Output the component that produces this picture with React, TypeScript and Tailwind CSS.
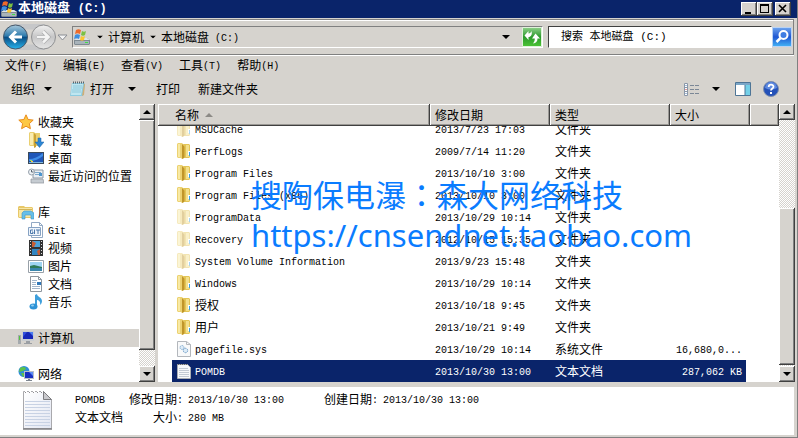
import { ReactNode, useState } from "react";

type IconProps = { className?: string };

const raised =
  "bg-[#d6d3ce] shadow-[inset_-1px_-1px_#404040,inset_1px_1px_#fff,inset_-2px_-2px_#808080]";

// Latin runs are set smaller so that one CJK glyph is as wide as two of them
function Txt({ children }: { children: string }) {
  return (
    <>
      {children.split(/([\x20-\x7e]+)/).map((part, i) =>
        i % 2 ? (
          <span
            key={i}
            className="align-middle font-['Liberation_Mono',monospace] text-[10px] leading-none whitespace-pre"
          >
            {part}
          </span>
        ) : (
          part
        )
      )}
    </>
  );
}

function Caret({ className = "" }: IconProps) {
  return (
    <svg width="8" height="4" viewBox="0 0 8 4" className={`shrink-0 ${className}`}>
      <path d="M0 0h8L4 4z" fill="currentColor" />
    </svg>
  );
}

function DriveIcon({ className = "" }: IconProps) {
  return (
    <svg width="17" height="17" viewBox="0 0 17 17" className={`shrink-0 ${className}`}>
      <path d="M1 11l3-2h10l3 2v4l-1 1H2l-1-1z" fill="#7f8a92" />
      <path d="M1 11l3-2h10l3 2z" fill="#dfe4e8" />
      <path d="M2 12h14v3H2z" fill="#a9b3ba" />
      <path d="M12 13h3v1h-3z" fill="#3fe04a" />
      <path d="M3 1c2-1 3-1 5 0L7 5C5 4 4 4 2 5z" fill="#ee6a2a" />
      <path d="M9 2c1 1 3 1 4 0l-1 4c-1 1-3 1-4 0z" fill="#7bc142" />
      <path d="M2 6c1-1 3-1 5 0l-1 4c-2-1-3-1-5 0z" fill="#3d8ee0" />
      <path d="M8 7c1 1 3 1 4 0l-1 4c-1 1-3 1-4 0z" fill="#fbc62f" />
    </svg>
  );
}

function FolderIcon({ faded = false }: { faded?: boolean }) {
  return (
    <svg
      width="14"
      height="16"
      viewBox="0 0 14 16"
      className={faded ? "shrink-0 opacity-45" : "shrink-0"}
    >
      <path d="M6 1h6l1 1v12l-1 1H5z" fill="#e3c556" />
      <path d="M9 2h3v12H9z" fill="#f3e08c" />
      <path d="M0 1l1-1h4l2 2v13l-2 1-1-1H1l-1-1z" fill="#ecd272" />
      <path d="M1 1h2v13H1z" fill="#f8e9a4" />
      <path d="M5 1l2 2v12l-2 1z" fill="#c0962a" />
      <path d="M7 4l1-1v11l-1 1z" fill="#d6b040" />
      <path d="M11 8h2v4h-2z" fill="#fff" />
      <path d="M12 9h1v4h-1z" fill="#3ba2e8" />
    </svg>
  );
}

function SysFileIcon() {
  return (
    <svg width="14" height="16" viewBox="0 0 14 16" className="shrink-0">
      <path d="M.5 .5h9l4 3v12H.5z" fill="#f8f9fa" stroke="#b3b7bc" />
      <path d="M9.500 .5v3h4" fill="none" stroke="#b3b7bc" />
      <circle cx="5" cy="6.500" r="2" fill="#dcebf7" stroke="#86aed2" strokeDasharray="1.500 .6" />
      <circle cx="8.500" cy="9.500" r="2.200" fill="#dcebf7" stroke="#6f9dc7" strokeDasharray="1.500 .6" />
    </svg>
  );
}

function TextFileIcon() {
  return (
    <svg width="14" height="16" viewBox="0 0 14 16" className="shrink-0">
      <path d="M.5 1.500h10l3 3v11H.5z" fill="#f7f8fa" stroke="#a8acb2" />
      <path d="M2 5.500h9M2 7.500h10M2 9.500h10M2 11.500h10M2 13.500h10" stroke="#c3cad4" />
      <path d="M1 1.500h10" stroke="#666" strokeDasharray="1 1" />
    </svg>
  );
}

function NotepadLarge() {
  return (
    <svg width="32" height="42" viewBox="0 0 32 42" className="shrink-0">
      <defs>
        <linearGradient id="paper" x1="0" y1="0" x2="1" y2="1">
          <stop offset="0" stopColor="#fff" />
          <stop offset="1" stopColor="#e2e6f2" />
        </linearGradient>
      </defs>
      <path d="M1.500 2.500h20l8 8v29h-28z" fill="url(#paper)" stroke="#a9a9ad" />
      <path d="M1 40h29" stroke="#7e7e82" strokeWidth="1.500" />
      <path
        d="M3 12.500h25M3 15.500h25M3 18.500h25M3 21.500h25M3 24.500h25M3 27.500h25M3 30.500h25M3 33.500h25M3 36.500h25"
        stroke="#c8d2e4"
      />
      <path d="M21.500 2.500v8h8z" fill="#c9c9cd" stroke="#7c7c80" />
      <path d="M3 2.500h18" stroke="#fff" strokeWidth="3" strokeDasharray="2 2" />
      <path d="M3 3.500h18" stroke="#8f8f93" strokeDasharray="1 3" />
    </svg>
  );
}

const treeIcons: Record<string, ReactNode> = {
  star: (
    <path
      d="M8 .8l2.100 4.700 5.100.6-3.800 3.500 1 5.100L8 12.200l-4.400 2.500 1-5.100L.8 6.100l5.100-.6z"
      fill="#fdc844"
      stroke="#e98b1c"
    />
  ),
  download: (
    <>
      <path d="M1 1l1-1h4l1 1h5v13H2l-1-1z" fill="#ead071" />
      <path d="M2 1h3v12H2z" fill="#faecb0" />
      <path d="M6 1l2 2v12l-2 1z" fill="#cba233" />
      <path d="M10 6h3v4h3l-4.500 5.500L7 10h3z" fill="#2d87d4" stroke="#1b62a8" strokeWidth=".5" />
    </>
  ),
  desktop: (
    <>
      <path d="M0 2h16v12H0z" fill="#3a4a5c" />
      <path d="M1 3h14v9H1z" fill="#1f56b8" />
      <path d="M1 9c5 0 9-2 14-6v3c-4 3-8 5-14 5z" fill="#3f8ce6" />
      <path d="M1 12h14v1H1z" fill="#7fb7dd" />
      <path d="M2 10h2v1H2z" fill="#9fe05a" />
      <path d="M3 11h2v1H3z" fill="#ffc83a" />
    </>
  ),
  recent: (
    <>
      <path d="M5 2h10v8H5z" fill="#e9eef3" stroke="#8c98a4" />
      <path d="M7 4h6v1H7zM7 6h4v1H7z" fill="#7ea9cb" />
      <path d="M11 5h3v3h-3z" fill="#4b95cf" />
      <path d="M3 11h12l1 4H3z" fill="#c6ccd2" stroke="#8c949c" strokeWidth=".7" />
      <circle cx="3.500" cy="4" r="3" fill="#eef2f6" stroke="#96a0aa" />
      <path d="M3.500 2v2h2" stroke="#5b6772" fill="none" />
    </>
  ),
  library: (
    <>
      <path d="M0 3l1-1h5l1 1h7l1 1v9l-1 1H1l-1-1z" fill="#e8c868" />
      <path d="M1 4h13v9H1z" fill="#f8e7a6" />
      <path d="M1 5h13v1H1z" fill="#d3b457" />
      <path d="M4 15V9l2-2h7l3 2v6h-3v-4H7v4z" fill="#67bfe8" stroke="#3c95c8" strokeWidth=".6" />
    </>
  ),
  git: (
    <>
      <path d="M3.500 .5h8l3 3v12h-11z" fill="#fff" stroke="#92a9c4" />
      <path d="M11.500 .5v3h3" fill="none" stroke="#92a9c4" />
      <path d="M.5 5.500h12v8H.5z" fill="#eef4fb" stroke="#86a2c3" />
      <path
        d="M5 8H2.500v3.500H5V10H4M6.500 7.500V12M8 8h4M10 8v4"
        fill="none"
        stroke="#4c78ab"
      />
    </>
  ),
  video: (
    <>
      <path d="M1 0h14v16H1z" fill="#333" />
      <path d="M4 1h8v6H4z" fill="#4ba3da" />
      <path d="M4 9h8v6H4z" fill="#3286c2" />
      <path d="M4 1l4 2-2 4H4zM12 9l-3 2 1 4h2z" fill="#c85e35" />
      <path d="M2.500 1v15M13.500 1v15" stroke="#ddd" strokeDasharray="1 2" />
    </>
  ),
  picture: (
    <>
      <path d="M.5 2.500h15v12H.5z" fill="#fff" stroke="#98a0a8" />
      <path d="M2 4h12v9H2z" fill="#9fd4f2" />
      <path d="M2 8l4-1 8 2v1H2z" fill="#2e7a58" />
      <path d="M2 10h12v3H2z" fill="#3a86ac" />
    </>
  ),
  document: (
    <>
      <path d="M2.500 .5h8l3 3v12h-11z" fill="#fff" stroke="#8e969e" />
      <path d="M10.500 .5v3h3" fill="none" stroke="#8e969e" />
      <path d="M4 4.500h5M4 6.500h4M4 8.500h4M4 10.500h8M4 12.500h8" stroke="#a4b6ca" />
      <path d="M9 6h4v3H9z" fill="#3178b9" />
    </>
  ),
  music: (
    <>
      <path d="M7 1l2-1c0 3 5 3 5 7 0 2-1 3-2 4 1-4-2-5-3-5v6H7z" fill="#3d9fdc" />
      <ellipse cx="5.500" cy="12.500" rx="4" ry="3" fill="#2f93d6" />
      <ellipse cx="4.500" cy="11.500" rx="1.500" ry="1" fill="#8fd0f4" />
    </>
  ),
  computer: (
    <>
      <path d="M4 1h12v10H4z" fill="#c9cdd1" />
      <path d="M5 2h10v7H5z" fill="#1627b8" />
      <path d="M11 2h4v4z" fill="#4d7df0" />
      <path d="M5 2h4L5 7z" fill="#3350dc" />
      <path d="M8 11h4v2h2v1H6v-1h2z" fill="#9a9ea3" />
      <path d="M0 5h3v9H0z" fill="#a4a9ad" />
      <path d="M1 6h1v4H1z" fill="#52c43e" />
    </>
  ),
  network: (
    <>
      <circle cx="6" cy="5.500" r="5.500" fill="#2f8fd8" />
      <path d="M2 2c3-2 6-1 6 1L5 5 1 6zM3 7h4v3l-2 1z" fill="#5cc24a" />
      <path d="M6 5h10v8H6z" fill="#b8bfca" />
      <path d="M7 6h8v6H7z" fill="#1730c0" />
      <path d="M11 6h4v4z" fill="#5c8cf4" />
      <path d="M10 13h2v1h2v1H8v-1h2z" fill="#7f8791" />
    </>
  ),
};

const tree = [
  {
    label: "收藏夹",
    icon: "star",
    children: [
      { label: "下载", icon: "download" },
      { label: "桌面", icon: "desktop" },
      { label: "最近访问的位置", icon: "recent" },
    ],
  },
  {
    label: "库",
    icon: "library",
    children: [
      { label: "Git", icon: "git" },
      { label: "视频", icon: "video" },
      { label: "图片", icon: "picture" },
      { label: "文档", icon: "document" },
      { label: "音乐", icon: "music" },
    ],
  },
  { label: "计算机", icon: "computer", active: true, children: [] },
  { label: "网络", icon: "network", children: [] },
];

const files = [
  { name: "MSUCache", date: "2013/7/23 17:03", type: "文件夹", size: "", icon: "faded" },
  { name: "PerfLogs", date: "2009/7/14 11:20", type: "文件夹", size: "", icon: "folder" },
  { name: "Program Files", date: "2013/10/10 3:00", type: "文件夹", size: "", icon: "folder" },
  { name: "Program Files (x86)", date: "2013/10/10 3:00", type: "文件夹", size: "", icon: "folder" },
  { name: "ProgramData", date: "2013/10/29 10:14", type: "文件夹", size: "", icon: "faded" },
  { name: "Recovery", date: "2012/10/15 15:35", type: "文件夹", size: "", icon: "faded" },
  { name: "System Volume Information", date: "2013/9/23 15:48", type: "文件夹", size: "", icon: "faded" },
  { name: "Windows", date: "2013/10/29 10:14", type: "文件夹", size: "", icon: "folder" },
  { name: "授权", date: "2013/10/18 9:45", type: "文件夹", size: "", icon: "folder" },
  { name: "用户", date: "2013/10/21 9:49", type: "文件夹", size: "", icon: "folder" },
  { name: "pagefile.sys", date: "2013/10/29 10:14", type: "系统文件", size: "16,680,0...", icon: "sys" },
  { name: "POMDB", date: "2013/10/30 13:00", type: "文本文档", size: "287,062 KB", icon: "text" },
];

function FileIcon({ kind }: { kind: string }) {
  if (kind === "sys") return <SysFileIcon />;
  if (kind === "text") return <TextFileIcon />;
  return <FolderIcon faded={kind === "faded"} />;
}

function ScrollBar({ before, thumb, after }: { before: string; thumb: string; after: string }) {
  return (
    <div className="flex w-4 shrink-0 flex-col bg-[repeating-conic-gradient(#fff_0_25%,#d6d3ce_0_50%)] bg-[length:2px_2px]">
      <button aria-label="向上滚动" className={`flex h-4 items-center justify-center ${raised}`}>
        <Caret className="rotate-180" />
      </button>
      <div className={before} />
      <div className={`${thumb} ${raised}`} />
      <div className={after} />
      <button aria-label="向下滚动" className={`flex h-4 items-center justify-center ${raised}`}>
        <Caret />
      </button>
    </div>
  );
}

function TitleBar() {
  return (
    <header className="flex h-[18px] shrink-0 items-center bg-[#0a246a] pr-[6px] text-white">
      <DriveIcon />
      <h1 className="pl-px font-['Liberation_Mono','Noto_Sans_CJK_SC',monospace] text-[13px] leading-[18px] font-bold whitespace-pre">
        本地磁盘 <span className="text-xs">(C:)</span>
      </h1>
      <div className="ml-auto flex text-black">
        <button aria-label="最小化" className={`h-[14px] w-4 ${raised}`}>
          <svg width="16" height="14" viewBox="0 0 16 14">
            <path d="M4 10h6v2H4z" />
          </svg>
        </button>
        <button aria-label="最大化" className={`h-[14px] w-4 ${raised}`}>
          <svg width="16" height="14" viewBox="0 0 16 14">
            <path d="M3 2h9v9H3zM4 4v6h7V4z" fillRule="evenodd" />
          </svg>
        </button>
        <button aria-label="关闭" className={`ml-[2px] h-[14px] w-4 ${raised}`}>
          <svg width="16" height="14" viewBox="0 0 16 14">
            <path d="M4 3l7 7M11 3l-7 7" stroke="#000" strokeWidth="1.600" />
          </svg>
        </button>
      </div>
    </header>
  );
}

function NavBar() {
  return (
    <div className="mt-px mr-[3px] flex h-9 shrink-0 items-center border border-l-0 border-[#808080] pl-[3px] shadow-[inset_0_1px_#fff,0_1px_#fff]">
      <svg width="65" height="28" viewBox="0 0 65 28" className="shrink-0">
        <defs>
          <linearGradient id="back" x1="0" y1="0" x2="0" y2="1">
            <stop offset="0" stopColor="#a9c9dc" />
            <stop offset=".45" stopColor="#2f7cae" />
            <stop offset=".52" stopColor="#0a4f86" />
            <stop offset="1" stopColor="#27b4ee" />
          </linearGradient>
          <linearGradient id="fwd" x1="0" y1="0" x2="0" y2="1">
            <stop offset="0" stopColor="#f1f1f1" />
            <stop offset=".5" stopColor="#c6c6c7" />
            <stop offset="1" stopColor="#e6e6e6" />
          </linearGradient>
        </defs>
        <path d="M10 1h32v4c-6 2-22 2-28 0zM10 27h32v-4c-6-2-22-2-28 0z" fill="#c6c7c9" />
        <circle cx="12.500" cy="14" r="12" fill="url(#back)" stroke="#46586a" />
        <path d="M13 8.500L7.500 14l5.500 5.500M8 14h11" fill="none" stroke="#fff" strokeWidth="3" />
        <circle cx="40.500" cy="14" r="12" fill="url(#fwd)" stroke="#8f9092" />
        <path d="M40 8.500l5.500 5.500-5.500 5.500M45 14H34" fill="none" stroke="#aaabac" strokeWidth="4" />
        <path d="M40 8.500l5.500 5.500-5.500 5.500M45 14H34" fill="none" stroke="#f4f4f4" strokeWidth="2.600" />
        <path d="M55 12h9l-4.500 5z" fill="#f4f4f4" stroke="#8a8d94" />
      </svg>
      <nav
        aria-label="地址"
        className="ml-1 flex h-[22px] min-w-0 flex-1 items-center border border-t-[#808080] border-r-white border-b-white border-l-[#808080]"
      >
        <DriveIcon />
        <Caret className="ml-[6px] scale-75" />
        <a href="#computer" className="ml-1 whitespace-nowrap">
          计算机
        </a>
        <Caret className="ml-[5px] scale-75" />
        <a href="#c" className="ml-1 whitespace-nowrap">
          <Txt>本地磁盘 (C:)</Txt>
        </a>
        <button aria-label="历史地址" className="mr-3 ml-auto">
          <Caret />
        </button>
        <button aria-label="刷新">
          <svg width="20" height="20" viewBox="0 0 20 20">
            <defs>
              <linearGradient id="reload" x1="0" y1="0" x2="0" y2="1">
                <stop offset="0" stopColor="#8fd08a" />
                <stop offset=".5" stopColor="#2c9a2c" />
                <stop offset="1" stopColor="#4cc435" />
              </linearGradient>
            </defs>
            <path d="M.5 .5h19v19H.5z" fill="url(#reload)" stroke="#dff2da" />
            <path d="M2.500 8.500L6.500 4v2.500c1.500 0 2.500-1 3-2.500 1 3.500-.5 6-3 6V13z" fill="#fff" />
            <path d="M10 11.500l3.500-5 4.500 5h-2.500c0 3-1.500 4.500-4.500 5 1.300-1.500 1.800-3 1.800-5z" fill="#fff" />
          </svg>
        </button>
      </nav>
      <div className="ml-[5px] flex w-[224px] items-center">
        <input
          aria-label="搜索"
          placeholder="搜索 本地磁盘 (C:)"
          className="h-[22px] min-w-0 flex-1 border border-t-[#404040] border-r-white border-b-white border-l-[#404040] bg-white pl-3 font-['Liberation_Mono','Noto_Sans_CJK_SC',monospace] text-[11px] outline-none placeholder:text-black"
        />
      </div>
      <button aria-label="开始搜索" className="mr-px">
        <svg width="20" height="20" viewBox="0 0 20 20">
          <defs>
            <linearGradient id="find" x1="0" y1="0" x2="0" y2="1">
              <stop offset="0" stopColor="#6fa5ee" />
              <stop offset=".5" stopColor="#1f57d2" />
              <stop offset="1" stopColor="#44b4f6" />
            </linearGradient>
          </defs>
          <path d="M.5 .5h19v19H.5z" fill="url(#find)" stroke="#b9d2f3" />
          <circle cx="11.500" cy="8" r="4" fill="#3f7de2" stroke="#fff" strokeWidth="2" />
          <path d="M8.500 11l-4 4" stroke="#fff" strokeWidth="2.500" />
        </svg>
      </button>
    </div>
  );
}

function MenuBar() {
  const items = ["文件(F)", "编辑(E)", "查看(V)", "工具(T)", "帮助(H)"];
  return (
    <nav className="mt-px flex h-[18px] shrink-0 items-center gap-4 pl-[5px]">
      {items.map((item) => (
        <button key={item} className="whitespace-nowrap">
          <Txt>{item}</Txt>
        </button>
      ))}
    </nav>
  );
}

function ToolBar() {
  return (
    <div className="flex h-[30px] shrink-0 items-center pr-[18px] pl-[11px] whitespace-nowrap">
      <button className="flex items-center gap-[9px]">
        组织
        <Caret />
      </button>
      <button className="ml-[18px] flex items-center gap-1">
        <svg width="16" height="16" viewBox="0 0 16 16">
          <path d="M2 2h12l1 1-2 12H0z" fill="#8ccbe0" />
          <path d="M2 3h11l-2 11H1z" fill="#bfe6f0" />
          <path d="M3 5h9M3 7h9M2 9h9M2 11h9" stroke="#7dbbd2" strokeWidth=".7" />
          <path d="M14 3h1l-1 11-2 1z" fill="#cfae77" />
          <path d="M3 1.500h11" stroke="#56646c" strokeWidth="2" strokeDasharray="1 1" />
        </svg>
        打开
      </button>
      <button aria-label="打开方式" className="ml-[14px]">
        <Caret />
      </button>
      <button className="ml-5">打印</button>
      <button className="ml-[18px]">新建文件夹</button>
      <div className="ml-auto flex items-center">
        <button aria-label="更改视图">
          <svg width="16" height="13" viewBox="0 0 16 13">
            <path d="M.5 .5h3v12h-3zM.5 4.500h3M.5 8.500h3" fill="#fff" stroke="#8a97a8" />
            <path d="M1.500 2.500h1M1.500 10.500h1" stroke="#4778b4" />
            <path d="M1.500 6.500h1" stroke="#c33" />
            <path d="M6 2.500h10M6 6.500h10M6 10.500h10" stroke="#7b8796" strokeDasharray="4 1" />
          </svg>
        </button>
        <button aria-label="更多视图" className="ml-3">
          <Caret />
        </button>
        <button aria-label="预览窗格" className="ml-[15px]">
          <svg width="16" height="14" viewBox="0 0 16 14">
            <path d="M.5 .5h15v13H.5z" fill="#fff" stroke="#4e7596" />
            <path d="M1 1h14v2H1z" fill="#7ba6c7" />
            <path d="M10 3h5v10h-5z" fill="#73d0e8" />
            <path d="M10 3v10" stroke="#4e7596" />
          </svg>
        </button>
        <button aria-label="帮助" className="ml-3">
          <svg width="16" height="16" viewBox="0 0 16 16">
            <circle cx="8" cy="8" r="7.500" fill="#2451b8" stroke="#7f8fae" />
            <path d="M2 7a6 6 0 0112 0c-4 2-8 2-12 0z" fill="#5f8ae0" />
            <path d="M5.700 6c0-3 4.800-3 4.800-.3C10.500 7.500 8 7.500 8 9.500" fill="none" stroke="#fff" strokeWidth="1.800" />
            <path d="M7 11h2v2H7z" fill="#fff" />
          </svg>
        </button>
      </div>
    </div>
  );
}

function TreeItem({ label, icon, child, active }: { label: string; icon: string; child?: boolean; active?: boolean }) {
  return (
    <a
      href={`#${icon}`}
      className={`flex h-[18px] items-center gap-1 whitespace-nowrap ${child ? "pl-7" : "pl-[18px]"} ${active ? "bg-[#d6d3ce]" : ""}`}
    >
      <svg width="16" height="16" viewBox="0 0 16 16" className="shrink-0">
        {treeIcons[icon]}
      </svg>
      <span>
        <Txt>{label}</Txt>
      </span>
    </a>
  );
}

function FileTable() {
  const [selected, setSelected] = useState("POMDB");
  const th =
    "h-[22px] p-0 text-left font-normal bg-[#d6d3ce] shadow-[inset_-1px_-1px_#404040,inset_1px_1px_#fff,inset_-2px_-2px_#9a9894]";

  return (
    <table className="w-full table-fixed border-collapse whitespace-nowrap">
      <colgroup>
        <col className="w-[14px]" />
        <col />
        <col className="w-[120px]" />
        <col className="w-[120px]" />
        <col className="w-20" />
        <col className="w-[29px]" />
      </colgroup>
      <thead>
        <tr>
          <th colSpan={2} className={th}>
            <button className="flex items-center gap-[6px] pl-[17px]">
              名称
              <Caret className="rotate-180 text-[#8c8a86]" />
            </button>
          </th>
          <th className={`${th} pl-[5px]`}>修改日期</th>
          <th className={`${th} pl-[5px]`}>类型</th>
          <th className={`${th} pl-[5px]`}>大小</th>
          <th className={th} />
        </tr>
      </thead>
      <tbody>
        {files.map((file, i) => {
          // the first row is partly scrolled under the header
          const clip = i === 0 ? "h-[14px] items-end" : "h-[22px] items-center";
          const bg = file.name === selected ? "bg-[#0a246a] text-white" : "";
          const cell = `flex overflow-hidden ${clip} ${bg}`;
          const inner = "flex h-[22px] shrink-0 items-center";
          return (
            <tr key={file.name} onClick={() => setSelected(file.name)}>
              <td className="p-0" />
              <td className="p-0">
                <div className={cell}>
                  <div className={`${inner} gap-1 pl-[5px]`}>
                    <FileIcon kind={file.icon} />
                    <span>
                      <Txt>{file.name}</Txt>
                    </span>
                  </div>
                </div>
              </td>
              <td className="p-0">
                <div className={cell}>
                  <div className={`${inner} pl-[5px]`}>
                    <span>
                      <Txt>{file.date}</Txt>
                    </span>
                  </div>
                </div>
              </td>
              <td className="p-0">
                <div className={cell}>
                  <div className={`${inner} pl-[5px]`}>{file.type}</div>
                </div>
              </td>
              <td className="p-0">
                <div className={`${cell} mr-1 justify-end pr-1`}>
                  <div className={inner}>
                    <span>
                      <Txt>{file.size}</Txt>
                    </span>
                  </div>
                </div>
              </td>
              <td className="p-0" />
            </tr>
          );
        })}
      </tbody>
    </table>
  );
}

function Details() {
  return (
    <footer className="mr-[3px] flex h-12 shrink-0 bg-white pl-[22px] leading-[18px] whitespace-nowrap">
      <div className="pt-[2px]">
        <NotepadLarge />
      </div>
      <div className="ml-[21px] pt-[3px]">
        <p>
          <Txt>POMDB</Txt>
        </p>
        <p>文本文档</p>
      </div>
      <dl className="ml-[6px] grid grid-cols-[54px_auto] content-start gap-x-[5px] pt-[3px]">
        <dt className="text-right">
          <Txt>修改日期:</Txt>
        </dt>
        <dd>
          <Txt>2013/10/30 13:00</Txt>
        </dd>
        <dt className="text-right">
          <Txt>大小:</Txt>
        </dt>
        <dd>
          <Txt>280 MB</Txt>
        </dd>
      </dl>
      <dl className="ml-10 flex gap-[5px] pt-[3px]">
        <dt>
          <Txt>创建日期:</Txt>
        </dt>
        <dd>
          <Txt>2013/10/30 13:00</Txt>
        </dd>
      </dl>
    </footer>
  );
}

export default function App() {
  return (
    <div className="relative flex h-screen flex-col overflow-hidden border-r border-b border-[#808080] bg-[#d6d3ce] font-['Noto_Sans_CJK_SC',sans-serif] text-xs leading-4 text-black">
      <TitleBar />
      <NavBar />
      <MenuBar />
      <ToolBar />
      <main className="mr-[2px] flex min-h-0 flex-1 gap-[3px]">
        <aside className="flex w-[155px] shrink-0 bg-white">
          <div className="flex min-w-0 flex-1 flex-col gap-[18px] overflow-hidden pt-[9px]">
            {tree.map((group) => (
              <div key={group.label}>
                <TreeItem label={group.label} icon={group.icon} active={group.active} />
                {group.children.map((item) => (
                  <TreeItem key={item.label} label={item.label} icon={item.icon} child />
                ))}
              </div>
            ))}
          </div>
          <ScrollBar before="h-0" thumb="flex-1" after="h-4" />
        </aside>
        <section className="flex min-w-0 flex-1 bg-white">
          <div className="min-w-0 flex-1 overflow-hidden">
            <FileTable />
          </div>
          <ScrollBar before="grow-[88]" thumb="grow-[158]" after="h-px" />
        </section>
      </main>
      <div className="h-[5px] shrink-0" />
      <Details />
      <div className="h-[2px] shrink-0" />
      <div className="pointer-events-none absolute top-[174px] left-[251px] font-['Noto_Sans','Noto_Sans_CJK_SC',sans-serif] text-[31px] leading-10 whitespace-nowrap text-[#0a7cff]">
        <p>
          搜陶保电瀑<span className="font-['Noto_Sans_CJK_TC']">：</span>森大网络科技
        </p>
        <p>https://cnsendnet.taobao.com</p>
      </div>
    </div>
  );
}
